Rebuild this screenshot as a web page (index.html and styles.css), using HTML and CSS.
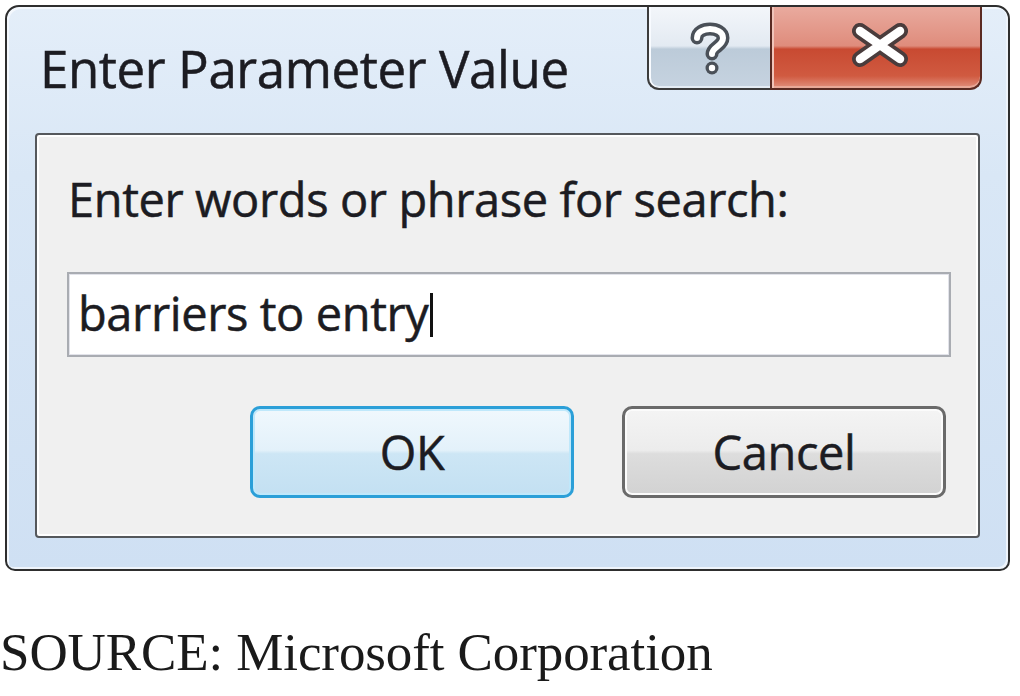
FILE: index.html
```html
<!DOCTYPE html>
<html>
<head>
<meta charset="utf-8">
<link rel="stylesheet" href="styles.css">
</head>
<body>
<div class="window">
  <div class="titlebar">
    <span class="title">Enter Parameter Value</span>
    <div class="caption">
      <div class="cap-btn help">
        <svg width="44" height="56" viewBox="0 0 44 56">
          <path d="M9 17 C9 5 35 5 35 17 C35 25 24 26 24 33" fill="none" stroke="#4a5058" stroke-width="13" stroke-linecap="round" stroke-linejoin="round"/>
          <circle cx="24" cy="47" r="6.5" fill="#4a5058"/>
          <path d="M9 17 C9 5 35 5 35 17 C35 25 24 26 24 33" fill="none" stroke="#ffffff" stroke-width="6" stroke-linecap="round" stroke-linejoin="round"/>
          <circle cx="24" cy="47" r="3.2" fill="#ffffff"/>
        </svg>
      </div>
      <div class="cap-btn close">
        <svg width="62" height="46" viewBox="0 0 62 46">
          <path d="M11 9 L51 37 M51 9 L11 37" stroke="#4a3c3c" stroke-width="16" stroke-linecap="round"/>
          <path d="M11 9 L51 37 M51 9 L11 37" stroke="#ffffff" stroke-width="8.5" stroke-linecap="round"/>
        </svg>
      </div>
    </div>
  </div>
  <div class="panel">
    <div class="label">Enter words or phrase for search:</div>
    <div class="input"><span class="value">barriers to entry</span><span class="caret"></span></div>
    <div class="actions">
      <div class="btn ok">OK</div>
      <div class="btn cancel">Cancel</div>
    </div>
  </div>
</div>
<p class="source">SOURCE: Microsoft Corporation</p>
</body>
</html>
```

FILE: styles.css
```css
* { box-sizing: border-box; }
html, body { margin: 0; padding: 0; background: #ffffff; }
body { width: 1020px; height: 696px; overflow: hidden; }

.window {
  margin: 5px 0 0 5px;
  width: 1005px;
  height: 566px;
  border: 2px solid #2e2e2e;
  border-radius: 14px 14px 10px 10px;
  background: linear-gradient(180deg, #e4eef9 0%, #d9e7f6 30%, #cfe0f3 100%);
  box-shadow: inset 2px 2px 0 #f4f8fd, inset -2px -2px 0 #eef4fb;
  display: flex;
  flex-direction: column;
}

.titlebar {
  height: 126px;
  display: flex;
  align-items: flex-start;
}

.title {
  font-family: "Open Sans", "Noto Sans", sans-serif;
  font-size: 51px;
  color: #1c1c22;
  margin: 31px 0 0 33px;
  line-height: 60px;
  letter-spacing: -0.4px;
  -webkit-text-stroke: 0.5px #1c1c22;
}

.caption {
  margin-left: auto;
  margin-right: 26px;
  display: flex;
  height: 83px;
}

.cap-btn {
  height: 83px;
  display: flex;
  align-items: center;
  justify-content: center;
  border: 2px solid #3c3c3c;
  border-top: none;
}

.help {
  width: 123px;
  border-radius: 0 0 0 12px;
  border-right: none;
  background: linear-gradient(180deg, #f3f6fa 0%, #e3eaf2 48%, #bccbd9 52%, #c6d3e0 100%);
  box-shadow: inset 2px 0 0 #f8fbff, inset 0 -2px 0 #e4ecf4;
  padding-top: 2px;
}

.close {
  width: 212px;
  border-color: #5a2a22;
  border-radius: 0 0 12px 0;
  background: linear-gradient(180deg, #e9aa9e 0%, #df8c7c 48%, #c84a32 52%, #d05a40 85%, #e0907e 100%);
  box-shadow: inset 2px 0 0 #f0c4ba, inset 0 -2px 0 #e8a898;
  padding-bottom: 6px;
  padding-left: 8px;
}

.panel {
  margin: 0 28px 31px 28px;
  flex: 1;
  border: 2px solid #55585c;
  border-radius: 4px;
  background: #f0f0f0;
  box-shadow: inset 0 0 0 2px #ffffff;
  padding: 36px 30px 0 30px;
  display: flex;
  flex-direction: column;
}

.label {
  font-family: "Open Sans", "Noto Sans", sans-serif;
  font-size: 47px;
  line-height: 56px;
  color: #1c1c22;
  margin-left: 1px;
  letter-spacing: -0.4px;
  -webkit-text-stroke: 0.5px #1c1c22;
}

.input {
  margin-top: 45px;
  height: 85px;
  width: 884px;
  border: 2px solid #a9acb2;
  background: #ffffff;
  box-shadow: inset 0 0 0 1px #e2e3ea;
  display: flex;
  align-items: center;
  padding-left: 9px;
  padding-bottom: 4px;
  font-family: "Open Sans", "Noto Sans", sans-serif;
  font-size: 47px;
  line-height: 56px;
  color: #1c1c22;
  letter-spacing: -0.4px;
  -webkit-text-stroke: 0.5px #1c1c22;
}

.caret {
  display: inline-block;
  width: 3px;
  height: 44px;
  background: #111;
  margin-left: 1px;
  margin-top: 4px;
}

.actions {
  margin-top: 49px;
  display: flex;
  justify-content: flex-end;
  gap: 48px;
  padding-right: 2px;
}

.btn {
  height: 92px;
  width: 324px;
  border-radius: 10px;
  display: flex;
  align-items: center;
  justify-content: center;
  font-family: "Open Sans", "Noto Sans", sans-serif;
  font-size: 47px;
  color: #1c1c22;
  letter-spacing: -0.4px;
  -webkit-text-stroke: 0.5px #1c1c22;
}

.ok {
  border: 3px solid #2b9fd8;
  background: linear-gradient(180deg, #f0f8fd 0%, #e3f1fa 48%, #cde6f5 52%, #c3e0f2 100%);
  box-shadow: inset 0 0 0 2px #bfe8fb;
}

.cancel {
  border: 3px solid #6a6a6a;
  background: linear-gradient(180deg, #f4f4f4 0%, #ececec 48%, #dddddd 52%, #d2d2d2 100%);
  box-shadow: inset 0 0 0 2px #fbfbfb;
}

.source {
  margin: 51px 0 0 0;
  font-family: "Liberation Serif", "Times New Roman", serif;
  font-size: 53px;
  line-height: 60px;
  color: #1a1a1a;
  letter-spacing: -0.1px;
}
```
